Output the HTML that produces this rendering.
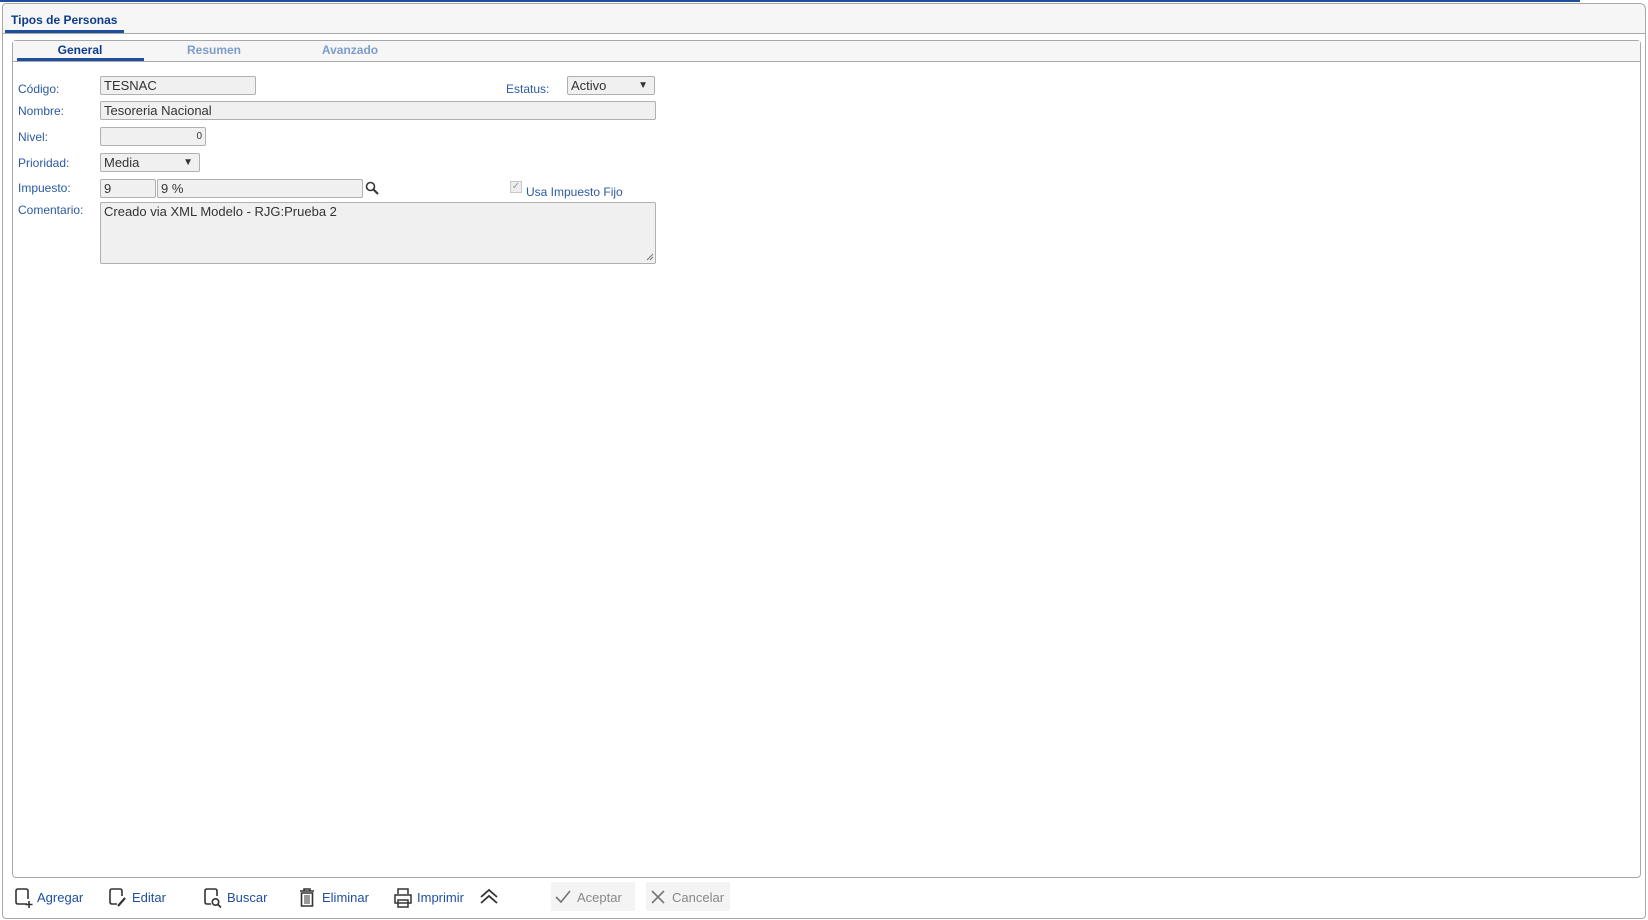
<!DOCTYPE html>
<html><head><meta charset="utf-8"><style>
*{box-sizing:border-box;margin:0;padding:0}
body{width:1648px;height:920px;background:#fff;font-family:"Liberation Sans",sans-serif;position:relative;overflow:hidden}
.a{position:absolute}
.topline{left:0;top:0;width:1580px;height:2px;background:#1d4f9e}
.outer{left:2px;top:3px;width:1644px;height:916px;border:1px solid #a8a8a8;border-radius:4px 6px 4px 4px}
.hdr{left:3px;top:4px;width:1642px;height:30px;background:#f6f6f6;border-bottom:1px solid #a8a8a8;border-radius:4px 6px 0 0}
.title{left:11px;top:13px;font-size:12px;font-weight:bold;color:#0d3c8c}
.tul{left:5px;top:30px;width:119px;height:3px;background:#1d4f9e}
.inner{left:12px;top:40px;width:1629px;height:838px;border:1px solid #a8a8a8;border-radius:4px 4px 4px 4px}
.tabbar{left:13px;top:41px;width:1627px;height:21px;background:#f6f6f6;border-bottom:1px solid #a8a8a8}
.tab{top:43px;font-size:12px;font-weight:bold;color:#7c9ccc;width:120px;text-align:center}
.tab.on{color:#0d3c8c}
.tabul{left:17px;top:58px;width:127px;height:3px;background:#1d4f9e}
.lbl{font-size:12px;color:#2c5aa0;left:18px}
.in{background:#f0f0f0;border:1px solid #b0b0b0;font-size:13px;color:#333;padding:1px 3px;line-height:16px;border-radius:2px}
.tb{top:890px;font-size:13px;color:#1f4fa0}
.btn{top:882px;width:84px;height:29px;background:#f4f4f4;font-size:13px;color:#888;padding:8px 0 0 26px}
</style></head><body>
<div class="a topline"></div>
<div class="a outer"></div>
<div class="a hdr"></div>
<div class="a title">Tipos de Personas</div>
<div class="a tul"></div>
<div class="a inner"></div>
<div class="a tabbar"></div>
<div class="a tab on" style="left:20px">General</div>
<div class="a tab" style="left:154px">Resumen</div>
<div class="a tab" style="left:290px">Avanzado</div>
<div class="a tabul"></div>

<div class="a lbl" style="top:82px">Código:</div>
<div class="a in" style="left:100px;top:76px;width:156px;height:19px">TESNAC</div>
<div class="a lbl" style="left:506px;top:82px">Estatus:</div>
<div class="a in" style="left:567px;top:76px;width:88px;height:19px;background:#f0f0f0">Activo<span style="position:absolute;right:6px;top:1px;font-size:10px">▼</span></div>
<div class="a lbl" style="top:104px">Nombre:</div>
<div class="a in" style="left:100px;top:101px;width:556px;height:19px">Tesoreria Nacional</div>
<div class="a lbl" style="top:130px">Nivel:</div>
<div class="a in" style="left:100px;top:127px;width:106px;height:19px;text-align:right;font-size:10px">0</div>
<div class="a lbl" style="top:156px">Prioridad:</div>
<div class="a in" style="left:100px;top:153px;width:100px;height:19px">Media<span style="position:absolute;right:6px;top:1px;font-size:10px">▼</span></div>
<div class="a lbl" style="top:181px">Impuesto:</div>
<div class="a in" style="left:100px;top:179px;width:56px;height:19px">9</div>
<div class="a in" style="left:157px;top:179px;width:206px;height:19px">9 %</div>
<svg class="a" style="left:365px;top:181px" width="14" height="14" viewBox="0 0 14 14"><circle cx="5.5" cy="5.5" r="4" fill="none" stroke="#333" stroke-width="1.6"/><path d="M8.5 8.5L13 13" stroke="#333" stroke-width="2"/></svg>
<div class="a" style="left:510px;top:181px;width:12px;height:12px;border:1px solid #c8c8c8;background:#eee;font-size:10px;color:#999;line-height:10px;text-align:center">✓</div>
<div class="a lbl" style="left:526px;top:185px">Usa Impuesto Fijo</div>
<div class="a lbl" style="top:203px">Comentario:</div>
<div class="a in" style="left:100px;top:202px;width:556px;height:62px">Creado via XML Modelo - RJG:Prueba 2</div>
<svg class="a" style="left:646px;top:253px" width="8" height="8" viewBox="0 0 8 8"><path d="M1 7L7 1M4 7L7 4" stroke="#777" stroke-width="1"/></svg>

<svg class="a" style="left:14px;top:887px" width="20" height="22" viewBox="0 0 20 22"><path d="M13 17H4Q2 17 2 15V4Q2 2 4 2H12Q14 2 14 4V12" fill="none" stroke="#333" stroke-width="1.6"/><path d="M15 14V21M11.5 17.5H18.5" stroke="#333" stroke-width="1.6"/></svg>
<div class="a tb" style="left:37px">Agregar</div>
<svg class="a" style="left:108px;top:887px" width="20" height="22" viewBox="0 0 20 22"><path d="M9 17H4Q2 17 2 15V4Q2 2 4 2H12Q14 2 14 4V9" fill="none" stroke="#333" stroke-width="1.6"/><path d="M10 19L17 11" stroke="#333" stroke-width="2.2"/></svg>
<div class="a tb" style="left:132px">Editar</div>
<svg class="a" style="left:203px;top:887px" width="20" height="22" viewBox="0 0 20 22"><path d="M8 17H4Q2 17 2 15V4Q2 2 4 2H12Q14 2 14 4V9" fill="none" stroke="#333" stroke-width="1.6"/><circle cx="12.5" cy="15" r="3.2" fill="none" stroke="#333" stroke-width="1.6"/><path d="M15 17.5L18 20.5" stroke="#333" stroke-width="1.8"/></svg>
<div class="a tb" style="left:227px">Buscar</div>
<svg class="a" style="left:298px;top:886px" width="18" height="22" viewBox="0 0 18 22"><path d="M2 5H16M6 5V3H12V5" fill="none" stroke="#333" stroke-width="1.6"/><path d="M3.5 7H14.5V20H3.5Z" fill="none" stroke="#333" stroke-width="1.6"/><path d="M7 9V18M9 9V18M11 9V18" stroke="#333" stroke-width="1"/></svg>
<div class="a tb" style="left:322px">Eliminar</div>
<svg class="a" style="left:393px;top:887px" width="20" height="22" viewBox="0 0 20 22"><path d="M5 7V2H15V7M2 8H18V16H2Z M5 13H15V20H5Z" fill="none" stroke="#333" stroke-width="1.5"/></svg>
<div class="a tb" style="left:417px">Imprimir</div>
<svg class="a" style="left:479px;top:887px" width="20" height="18" viewBox="0 0 20 18"><path d="M2 10L10 3L18 10M2 16L10 9L18 16" fill="none" stroke="#333" stroke-width="1.8"/></svg>
<div class="a btn" style="left:551px">Aceptar</div>
<svg class="a" style="left:554px;top:889px" width="18" height="16" viewBox="0 0 18 16"><path d="M2 8L7 13L16 2" fill="none" stroke="#777" stroke-width="1.6"/></svg>
<div class="a btn" style="left:646px">Cancelar</div>
<svg class="a" style="left:650px;top:889px" width="16" height="16" viewBox="0 0 16 16"><path d="M2 2L14 14M14 2L2 14" stroke="#777" stroke-width="1.6"/></svg>
</body></html>
